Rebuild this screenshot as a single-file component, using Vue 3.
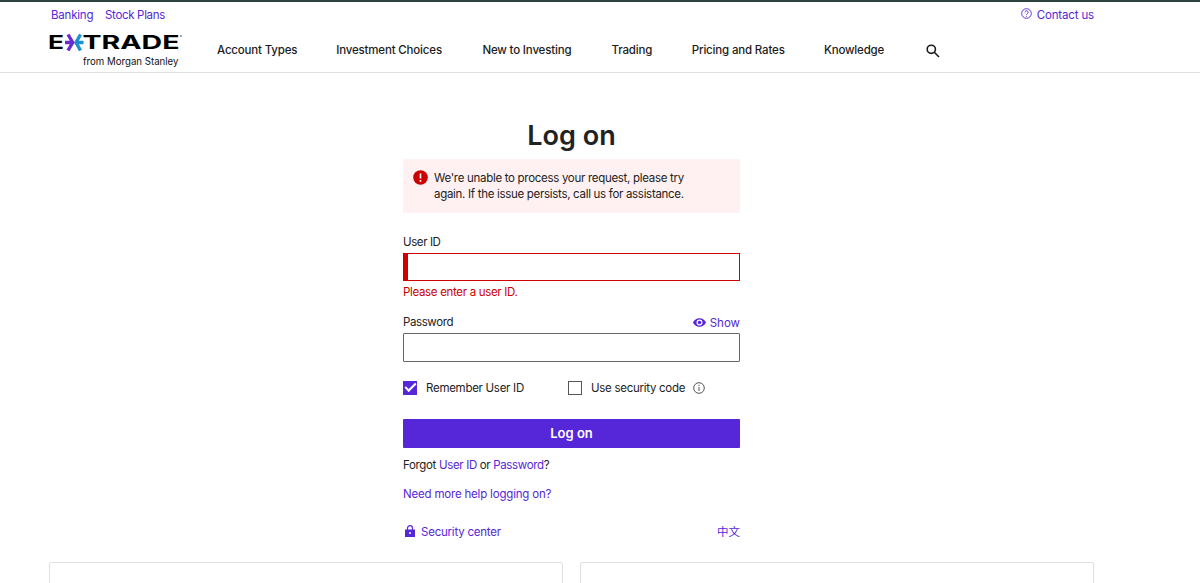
<template>
  <div class="page">
    <header class="header">
      <div class="utility">
        <a class="link banking" href="#">Banking</a>
        <a class="link stock" href="#">Stock Plans</a>
        <a class="link contact" href="#">
          <svg class="icon-help" viewBox="0 0 24 24">
            <circle cx="12" cy="12" r="10.500" />
            <path d="M8.500 9.500a3.500 3.500 0 1 1 5.500 2.900c-1.200 .8-2 1.300-2 2.600M12 17v2" />
          </svg>
          <span>Contact us</span>
        </a>
      </div>
      <div class="main-nav">
        <svg class="logo" viewBox="0 0 140 38">
          <text class="logo-name" x="-1" y="17" textLength="16" lengthAdjust="spacingAndGlyphs">E</text>
          <g class="star-right">
            <path d="M34.500 10.500H27M31.500 2.500L27 10.500L31.500 18.500" />
          </g>
          <g class="star-left">
            <path d="M16 10.500H24M19 2.500L23.700 10.500L19 18.500" />
          </g>
          <text class="logo-name" x="33.500" y="17" textLength="97" lengthAdjust="spacingAndGlyphs">TRADE</text>
          <circle cx="132" cy="4" r="0.900" fill="#777" />
          <text class="logo-sub" x="34" y="33" textLength="95.500" lengthAdjust="spacingAndGlyphs">from Morgan Stanley</text>
        </svg>
        <nav class="menu">
          <a v-for="item in menu" :key="item.label" href="#" :style="{ width: item.width + 'px' }">{{ item.label }}</a>
        </nav>
        <svg class="icon-search" viewBox="0 0 14 14">
          <circle cx="5.300" cy="5.300" r="4.100" />
          <path d="M8.300 8.300L13 13" />
        </svg>
      </div>
    </header>

    <main class="login">
      <h1>Log on</h1>
      <div class="alert">
        <svg class="icon-alert" viewBox="0 0 15 15">
          <circle cx="7.500" cy="7.500" r="7.300" fill="#c00" />
          <path d="M7.500 3.500v5M7.500 10v1.700" stroke="#fff" stroke-width="1.600" />
        </svg>
        <p>
          We're unable to process your request, please try<br>
          again. If the issue persists, call us for assistance.
        </p>
      </div>

      <label class="label label-user" for="user">User ID</label>
      <input id="user" v-model="userId" class="field field-error" type="text">
      <p class="error-text">Please enter a user ID.</p>

      <div class="password-head">
        <label class="label" for="password">Password</label>
        <a class="link show" href="#" @click.prevent="visible = !visible">
          <svg class="icon-eye" viewBox="0 0 24 16">
            <path fill-rule="evenodd" d="M12 0C6.500 0 2 3.300 0 8c2 4.700 6.500 8 12 8s10-3.300 12-8c-2-4.700-6.500-8-12-8zm0 13.500a5.500 5.500 0 1 1 0-11 5.500 5.500 0 0 1 0 11z" />
            <circle cx="12" cy="8" r="3.200" />
          </svg>
          <span>Show</span>
        </a>
      </div>
      <input id="password" v-model="password" class="field" :type="visible ? 'text' : 'password'">

      <div class="options">
        <label class="option remember">
          <input v-model="remember" type="checkbox">
          <span>Remember User ID</span>
        </label>
        <label class="option code">
          <input v-model="securityCode" type="checkbox">
          <span>Use security code</span>
        </label>
        <svg class="icon-info" viewBox="0 0 12 12">
          <circle cx="6" cy="6" r="5.300" />
          <path d="M6 5v4M6 2.800v1.200" />
        </svg>
      </div>

      <button class="submit" type="button"><span>Log on</span></button>

      <p class="forgot">Forgot <a class="link" href="#">User ID</a> or <a class="link" href="#">Password</a>?</p>
      <p class="help"><a class="link" href="#">Need more help logging on?</a></p>

      <div class="security">
        <a class="link center" href="#">
          <svg class="icon-lock" viewBox="0 0 10 12">
            <path d="M2.500 5V3.200a2.500 2.500 0 0 1 5 0V5" fill="none" stroke="#5627d8" stroke-width="1.200" />
            <path d="M0 4.500h10V12H0z" />
            <circle cx="5" cy="8" r="1" fill="#fff" />
          </svg>
          <span>Security center</span>
        </a>
        <a class="link chinese" href="#">中文</a>
      </div>
    </main>

    <section class="cards">
      <div class="card"></div>
      <div class="card"></div>
    </section>
  </div>
</template>

<script setup>
import { ref } from 'vue'

const menu = [
  { label: 'Account Types', width: 80 },
  { label: 'Investment Choices', width: 107 },
  { label: 'New to Investing', width: 90 },
  { label: 'Trading', width: 41 },
  { label: 'Pricing and Rates', width: 93 },
  { label: 'Knowledge', width: 61 }
]

const userId = ref('')
const password = ref('')
const visible = ref(false)
const remember = ref(true)
const securityCode = ref(false)
</script>

<style>
body {
  margin: 0;
  background: #fff;
}
</style>

<style scoped>
.page {
  box-sizing: border-box;
  width: 1200px;
  height: 583px;
  overflow: hidden;
  font-family: Inter, "Noto Sans CJK SC", sans-serif;
  font-size: 11.5px;
  line-height: 16px;
  color: #222;
}
p,
h1 {
  margin: 0;
}
a {
  text-decoration: none;
  white-space: nowrap;
}
.link {
  color: #5627d8;
}
.header {
  box-sizing: border-box;
  height: 73px;
  border-top: 2px solid #2b423f;
  border-bottom: 1px solid #e0e0e0;
}
.utility {
  display: flex;
  height: 29px;
  padding: 5px 106px 0 51px;
  box-sizing: border-box;
}
.banking {
  width: 54px;
  letter-spacing: -0.2px;
}
.stock {
  letter-spacing: -0.32px;
}
.contact {
  display: flex;
  gap: 5px;
  margin-left: auto;
  letter-spacing: -0.15px;
}
.icon-help {
  width: 11px;
  height: 11px;
  margin-top: 1px;
  fill: none;
  stroke: #5627d8;
  stroke-width: 2;
}
.main-nav {
  display: flex;
  padding-left: 49px;
}
.logo {
  width: 140px;
  height: 38px;
  margin-top: 1px;
}
.logo-name {
  font-size: 18.5px;
  font-weight: 700;
  fill: #000;
}
.logo-sub {
  font-size: 10.5px;
  fill: #111;
}
.star-left,
.star-right {
  fill: none;
  stroke-width: 3.4;
}
.star-left {
  stroke: #6a2bd0;
}
.star-right {
  stroke: #1b91cf;
}
.menu {
  display: flex;
  gap: 39.2px;
  margin: 11px 0 0 28px;
}
.menu a {
  color: #1c1c1c;
  font-weight: 500;
  letter-spacing: -0.17px;
}
.icon-search {
  width: 14px;
  height: 14px;
  margin: 13px 0 0 41px;
  fill: none;
  stroke: #1c1c1c;
  stroke-width: 1.6;
}
.login {
  display: flex;
  flex-direction: column;
  width: 337px;
  height: 489px;
  margin-left: 403px;
}
h1 {
  height: 86px;
  padding-top: 45px;
  box-sizing: border-box;
  font-size: 27px;
  font-weight: 600;
  line-height: 36px;
  text-align: center;
}
.alert {
  display: flex;
  gap: 6px;
  box-sizing: border-box;
  height: 54px;
  padding: 11px 10px;
  background: #fff1f1;
  letter-spacing: -0.3px;
  white-space: nowrap;
}
.icon-alert {
  width: 15px;
  height: 15px;
}
.label {
  letter-spacing: -0.4px;
}
.label-user {
  height: 19px;
  margin-top: 21px;
}
.field {
  box-sizing: border-box;
  width: 337px;
  height: 29px;
  flex: none;
  padding: 0 8px;
  border: 1px solid #666;
  border-radius: 1px;
  background: #fff;
  font: inherit;
  outline: none;
}
.field-error {
  height: 28px;
  border: 1px solid #d00000;
  border-left: 5px solid #d00000;
  border-radius: 0;
}
.error-text {
  height: 16px;
  padding-top: 3px;
  color: #c00;
  letter-spacing: -0.32px;
}
.password-head {
  display: flex;
  justify-content: space-between;
  height: 19px;
  margin-top: 14px;
}
.show {
  display: flex;
  gap: 4px;
  padding-top: 1px;
}
.icon-eye {
  width: 13px;
  height: 9px;
  margin-top: 3px;
  fill: #5627d8;
}
.options {
  display: flex;
  align-items: center;
  height: 16px;
  margin-top: 18px;
  letter-spacing: -0.28px;
}
.option {
  display: flex;
  align-items: center;
  gap: 9px;
}
.remember {
  width: 165px;
}
.option input {
  appearance: none;
  box-sizing: border-box;
  width: 14px;
  height: 14px;
  margin: 0;
  border: 1px solid #555;
  background: #fff;
}
.option input:checked {
  border-color: #5627d8;
  background: #5627d8;
}
.option input:checked::after {
  content: "";
  display: block;
  box-sizing: border-box;
  width: 11px;
  height: 6px;
  margin: 1px 0 0 1px;
  border: solid #fff;
  border-width: 0 0 2px 2px;
  transform: rotate(-45deg);
}
.icon-info {
  width: 12px;
  height: 12px;
  margin-left: 8px;
  fill: none;
  stroke: #555;
}
.submit {
  height: 29px;
  margin-top: 23px;
  padding: 0 0 2px;
  border: 0;
  border-radius: 1px;
  background: #5627d8;
  color: #fff;
  font-family: inherit;
  font-size: 13px;
  font-weight: 600;
}
.forgot {
  margin-top: 9px;
  letter-spacing: -0.34px;
}
.help {
  margin-top: 13px;
  letter-spacing: -0.19px;
}
.security {
  display: flex;
  justify-content: space-between;
  margin-top: 22px;
}
.center {
  display: flex;
  gap: 6px;
  padding-left: 2px;
  letter-spacing: -0.22px;
}
.icon-lock {
  width: 10px;
  height: 12px;
  margin-top: 1px;
  fill: #5627d8;
}
.cards {
  display: flex;
  gap: 17px;
  padding-left: 49px;
}
.card {
  box-sizing: border-box;
  width: 514px;
  height: 40px;
  border: 1px solid #e0e0e0;
  border-radius: 2px;
}
</style>
